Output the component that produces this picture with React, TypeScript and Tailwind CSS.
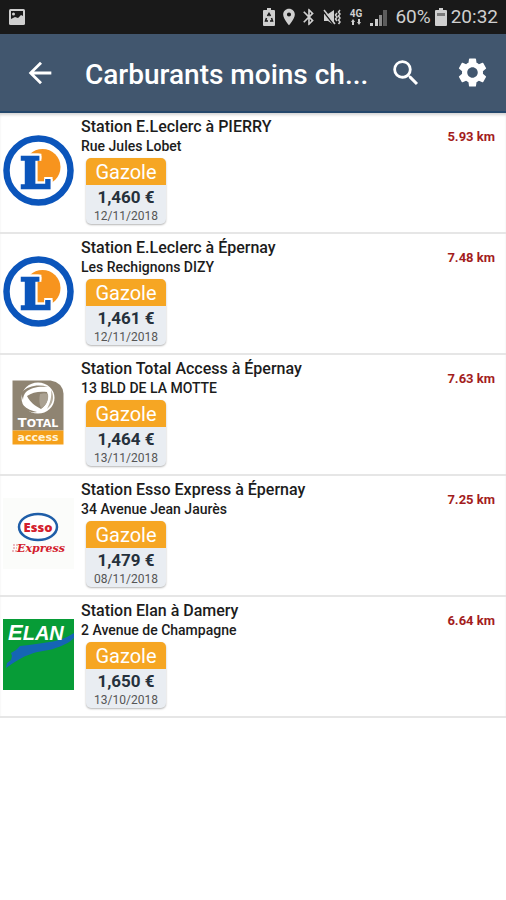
import type { ReactNode } from 'react';
import { MdArrowBack, MdBluetooth, MdLocationOn, MdSearch, MdSettings } from 'react-icons/md';

type Brand = 'leclerc' | 'total' | 'esso' | 'elan';

const STATIONS: { id: number; brand: Brand; name: string; address: string; price: string; date: string; distance: string }[] = [
  { id: 1, brand: 'leclerc', name: 'Station E.Leclerc à PIERRY', address: 'Rue Jules Lobet', price: '1,460 €', date: '12/11/2018', distance: '5.93 km' },
  { id: 2, brand: 'leclerc', name: 'Station E.Leclerc à Épernay', address: 'Les Rechignons DIZY', price: '1,461 €', date: '12/11/2018', distance: '7.48 km' },
  { id: 3, brand: 'total', name: 'Station Total Access à Épernay', address: '13 BLD DE LA MOTTE', price: '1,464 €', date: '13/11/2018', distance: '7.63 km' },
  { id: 4, brand: 'esso', name: 'Station Esso Express à Épernay', address: '34 Avenue Jean Jaurès', price: '1,479 €', date: '08/11/2018', distance: '7.25 km' },
  { id: 5, brand: 'elan', name: 'Station Elan à Damery', address: '2 Avenue de Champagne', price: '1,650 €', date: '13/10/2018', distance: '6.64 km' },
];

function LeclercLogo() {
  return (
    <svg viewBox="0 0 71 71" className="size-full" role="img" aria-label="E.Leclerc">
      <circle cx="35.5" cy="35.5" r="32" fill="#fff" stroke="#0b55bb" strokeWidth="6.5" />
      <circle cx="39.5" cy="32" r="18" fill="#f7941e" />
      <text
        x="17"
        y="53"
        fill="#0b55bb"
        stroke="#0b55bb"
        strokeWidth="2.5"
        className="font-['DejaVu_Serif',serif] text-[43px] font-bold [filter:drop-shadow(2px_0_0_#fff)_drop-shadow(-1px_0_0_#fff)_drop-shadow(0_-2px_0_#fff)]"
      >
        L
      </text>
    </svg>
  );
}

function TotalLogo() {
  return (
    <svg viewBox="0 0 71 71" className="size-full" role="img" aria-label="Total Access">
      <path d="M9.5 3.5h38q12 2 13 13v37h-51z" fill="#8f8472" />
      <path d="M9.5 53.5h51v14h-51z" fill="#f5a01a" />
      <ellipse cx="35" cy="21" rx="16.5" ry="15.5" fill="#fff" />
      {/* bandes du globe */}
      <path d="M19 15c6-6 16-8 26-5-8-1-17 0-22 5-2 2-3 5-3 8-1-3-2-6-1-8z" fill="#8f8472" />
      <path d="M24 19c5-4 13-5 20-4 2 6 0 13-6 17-6-3-11-7-14-13z" fill="#8f8472" />
      <path d="M37 17c4-1 6-1 8 0 1 6-2 12-7 14-2-4-2-10-1-14z" fill="#aaa192" />
      <path d="M20 28c4 4 9 6 14 7-6 1-12-1-14-7z" fill="#8f8472" />
      <path d="M48 13c4 7 2 14-4 19 3-6 5-12 4-19z" fill="#b6ae9f" />
      <text x="35" y="50" textAnchor="middle" fill="#fff" className="font-['DejaVu_Sans'] text-[13px] font-bold">
        T<tspan className="text-[11px]">OTAL</tspan>
      </text>
      <text x="35" y="64" textAnchor="middle" fill="#fff3d8" className="font-['DejaVu_Sans'] text-[11px] font-bold">
        access
      </text>
    </svg>
  );
}

function EssoLogo() {
  return (
    <svg viewBox="0 0 71 71" className="size-full bg-[#fbfcfa]" role="img" aria-label="Esso Express">
      <ellipse cx="35" cy="29" rx="19" ry="13" fill="#fff" stroke="#1f5ea8" strokeWidth="2.5" />
      <text x="35" y="34" textAnchor="middle" fill="#d3202d" className="font-['Open_Sans'] text-[13px] font-extrabold">
        Esso
      </text>
      <path d="M10 47h5M10 50h4M9 53h5" stroke="#e9a3ac" strokeWidth="1.5" strokeDasharray="2 1" />
      <text x="38" y="54" textAnchor="middle" fill="#d3202d" className="font-['DejaVu_Serif'] text-[11px] font-bold italic">
        Express
      </text>
    </svg>
  );
}

function ElanLogo() {
  return (
    <svg viewBox="0 0 71 71" className="size-full bg-[#079c37]" role="img" aria-label="Elan">
      <path
        d="M3 49l1-5 4-3 1-4-1-3 5-3 4-4 9-1 14-2c9-1 18-3 24-6l7-4v5c-5 5-12 8-21 11-8 2-15 2-22 5-9 3-17 8-25 14z"
        fill="#1565b5"
      />
      <text x="5" y="21" fill="#fff" className="font-['Liberation_Sans'] text-[22px] font-bold italic">
        E<tspan className="text-[20px]">LAN</tspan>
      </text>
    </svg>
  );
}

const LOGOS: Record<Brand, ReactNode> = {
  leclerc: <LeclercLogo />,
  total: <TotalLogo />,
  esso: <EssoLogo />,
  elan: <ElanLogo />,
};

function StatusBar() {
  return (
    <div className="flex h-[34px] items-center justify-between bg-[#191919] px-2 text-[#cfcfcf]">
      <svg viewBox="0 0 18 18" className="size-[18px]" aria-hidden="true">
        <rect x="1" y="1" width="16" height="16" rx="1.5" fill="#cfcfcf" />
        <path d="M3 3h12v5l-2-1-3 3-3-1-4 2z" fill="#191919" />
        <circle cx="5.5" cy="6" r="1.5" fill="#cfcfcf" />
      </svg>
      <div className="flex items-center gap-1">
        <svg viewBox="0 0 12 18" className="h-[18px] w-3" fill="currentColor" aria-hidden="true">
          <path d="M4 0h4v2h3q1 0 1 1v14q0 1-1 1H1q-1 0-1-1V3q0-1 1-1h3z" />
          <path d="M4.5 8L6 5.5 7.5 8M8.5 10l1 3H7M5 13H2.500l1-3" fill="none" stroke="#191919" strokeWidth="1.5" />
        </svg>
        <div className="flex items-center">
          <MdLocationOn className="size-5" />
          <MdBluetooth className="size-5" />
        </div>
        <svg viewBox="0 0 19 17" className="h-[17px] w-[19px]" fill="currentColor" aria-hidden="true">
          <path d="M1 5h4l6-4v15l-6-4H1z" />
          <path d="M0 2l11 14" stroke="#191919" strokeWidth="1.5" />
          <path d="M1 1l11 14" stroke="currentColor" strokeWidth="1.5" />
          <path d="M14 4l-1.5 2 1.5 2-1.5 2 1.5 2M17 1l-1.5 2 1.5 2-1.5 2 1.5 2-1.5 2 1.5 2-1.5 2" fill="none" stroke="currentColor" strokeWidth="1.5" />
        </svg>
        <div className="ml-1 flex flex-col items-center">
          <span className="text-[10px] leading-[10px] font-bold">4G</span>
          <svg viewBox="0 0 10 6" className="h-[6px] w-[10px]" fill="currentColor" aria-hidden="true">
            <path d="M0 3l2-3 2 3H3v3H1V3zM7 0h2v3h1L8 6 6 3h1z" />
          </svg>
        </div>
        <svg viewBox="0 0 17 17" className="mx-1 size-[17px]" aria-hidden="true">
          <path d="M0 14h3v3H0zM5 10h3v7H5z" fill="#cfcfcf" />
          <path d="M9 6h3v11H9z" fill="#8a8a8a" />
          <path d="M13 1h4v16h-4z" fill="#5c5c5c" />
        </svg>
        <span className="text-[19px] leading-6">60%</span>
        <svg viewBox="0 0 12 18" className="h-[18px] w-3" aria-hidden="true">
          <path d="M4 0h4v2h3q1 0 1 1v14q0 1-1 1H1q-1 0-1-1V3q0-1 1-1h3z" fill="#cfcfcf" />
          <path d="M2 5h8v3H2z" fill="#7a7a7a" />
        </svg>
        <span className="text-[19px] leading-6">20:32</span>
      </div>
    </div>
  );
}

export default function App() {
  return (
    <div className="min-h-screen bg-white font-['Roboto',sans-serif] text-[#1c1c1c]">
      <StatusBar />

      <header className="flex h-[79px] items-center border-b-2 border-[#24476b] bg-[#41566e] pr-4 pl-[23px] text-white">
        <button type="button" aria-label="Retour" className="shrink-0">
          <MdArrowBack className="size-[34px]" />
        </button>
        <h1 className="ml-7 grow truncate pt-1 text-[28px] leading-9 font-medium">Carburants moins ch...</h1>
        <button type="button" aria-label="Rechercher" className="shrink-0">
          <MdSearch className="size-[34px]" />
        </button>
        <button type="button" aria-label="Réglages" className="ml-8 shrink-0">
          <MdSettings className="size-[35px]" />
        </button>
      </header>

      <ul className="shadow-[inset_0_3px_3px_-1px_#d4d4d4]">
        {STATIONS.map((station) => (
          <li key={station.id} className="flex h-[121px] items-start border-b-2 border-[#e6e6e6] pr-[11px] pl-[3px]">
            <div className="mt-[22px] size-[71px] shrink-0">{LOGOS[station.brand]}</div>
            <div className="ml-[7px] grow pt-1">
              <h2 className="text-[16px] leading-5 font-medium">{station.name}</h2>
              <p className="text-[14px] leading-[18px] font-medium">{station.address}</p>
              <div className="mt-[3px] ml-[5px] w-20 overflow-hidden rounded-[5px] bg-[#e9edf2] text-center shadow-[0_1px_2px_#b5b5b5]">
                <p className="bg-[#f6a623] pt-[2px] text-[20px] leading-[25px] text-white">Gazole</p>
                <p className="text-[17px] leading-[25px] font-bold text-[#26313c]">{station.price}</p>
                <p className="pb-px text-[12px] leading-[13px] text-[#555]">{station.date}</p>
              </div>
            </div>
            <span className="mt-4 shrink-0 text-[13px] leading-4 font-bold text-[#a31d1d]">{station.distance}</span>
          </li>
        ))}
      </ul>
    </div>
  );
}
